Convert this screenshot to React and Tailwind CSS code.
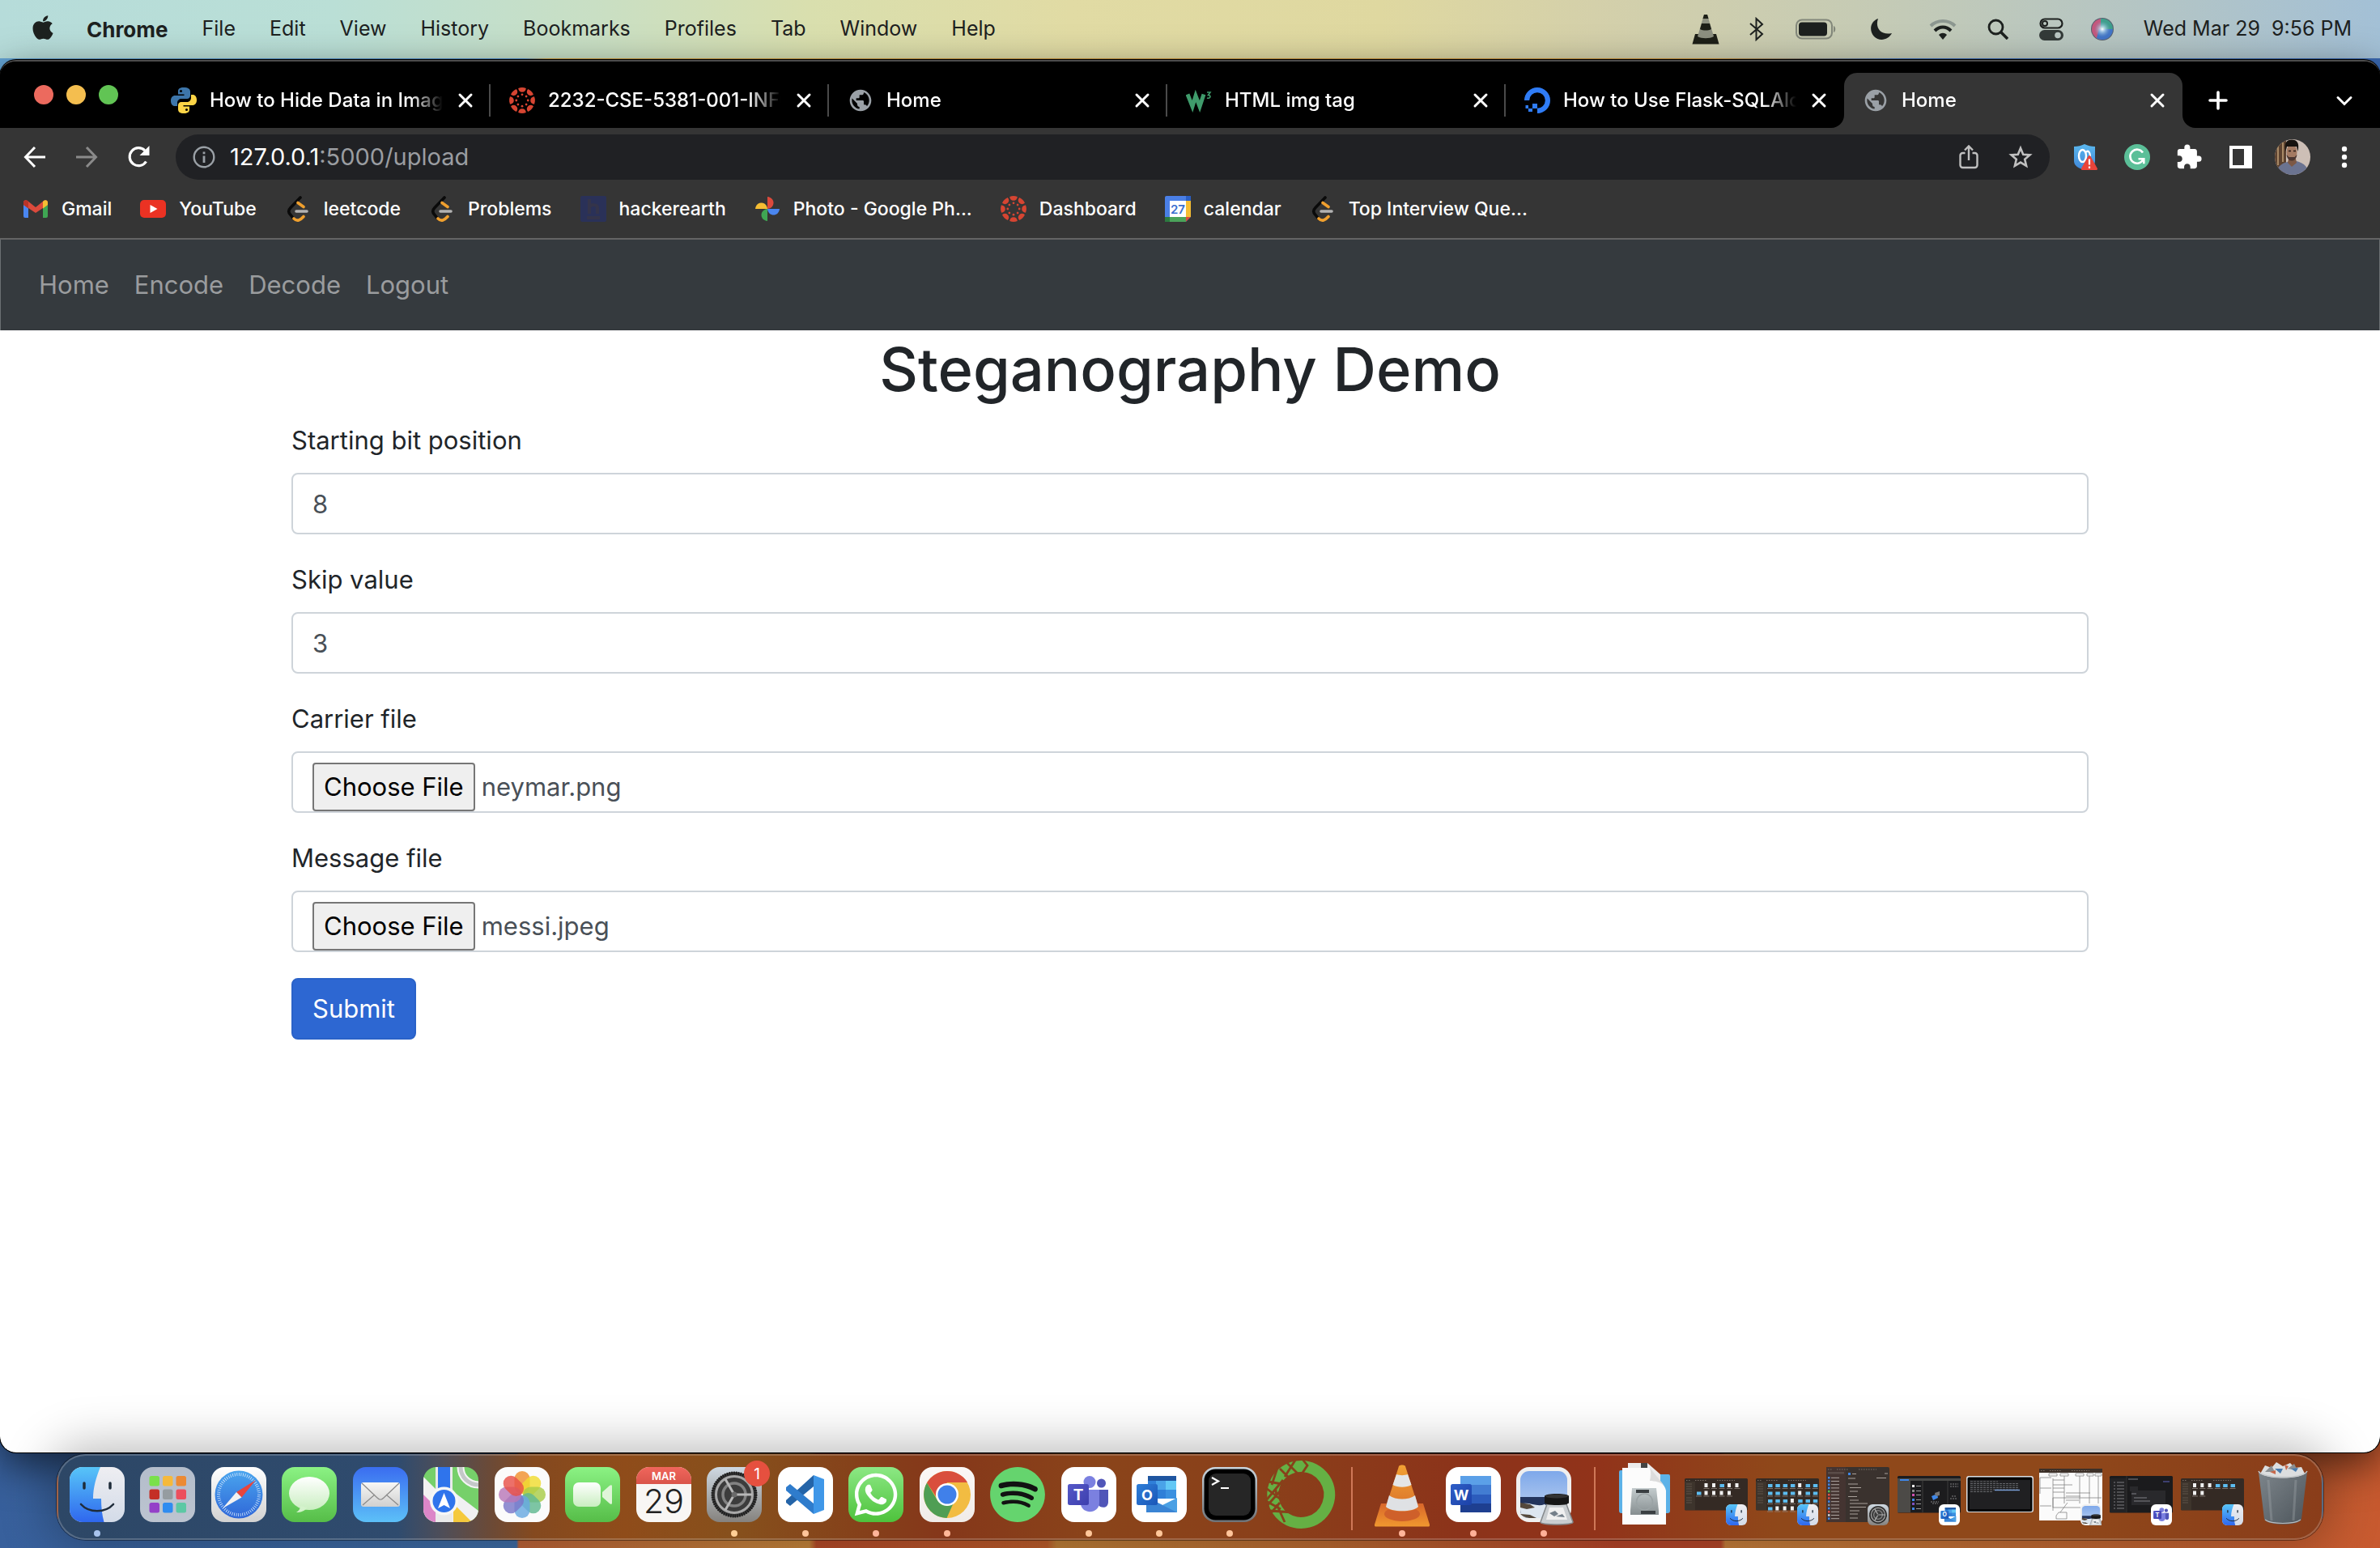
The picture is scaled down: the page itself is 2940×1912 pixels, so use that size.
import React from "react";
import { FaApple, FaWhatsapp, FaSpotify } from "react-icons/fa";
import { MdExtension, MdPublic } from "react-icons/md";

/* ---------- shared gradients ---------- */

function Grad({ id, a, b, diagonal }) {
  return (
    <linearGradient id={id} x1="0" y1="0" x2={diagonal ? "1" : "0"} y2="1">
      <stop offset="0" stopColor={a} />
      <stop offset="1" stopColor={b} />
    </linearGradient>
  );
}

function SharedDefs() {
  return (
    <svg className="absolute size-0" aria-hidden="true">
      <defs>
        <Grad id="finder-blue" a="#57c5f8" b="#2f67ee" />
        <Grad id="finder-grey" a="#eeeeF2" b="#d3dbe8" />
        <Grad id="pad" a="#b4bdcb" b="#bcc4d0" />
        <Grad id="white-grey" a="#ffffff" b="#d2d2d2" />
        <Grad id="safari" a="#4aa5ee" b="#2f67d8" />
        <Grad id="green" a="#8bf284" b="#56bd48" />
        <Grad id="bubble" a="#ffffff" b="#c9eec0" />
        <Grad id="mail" a="#3a6df0" b="#5cc0f8" />
        <Grad id="paper" a="#f7f7f5" b="#d0d0d0" />
        <Grad id="metal" a="#cfd9e2" b="#85827e" />
        <Grad id="wa" a="#8ce884" b="#4ec23c" />
        <Grad id="offwhite" a="#fbf8f6" b="#f0ebe8" />
        <Grad id="teams-box" a="#5558c8" b="#3d3fae" diagonal />
        <Grad id="outlook-box" a="#2f7fd8" b="#1a56b8" diagonal />
        <Grad id="word-box" a="#2f5fc8" b="#1c42a8" diagonal />
        <Grad id="term-edge" a="#c9d4dc" b="#6f7377" />
        <Grad id="cone" a="#f2a234" b="#d9702a" />
        <Grad id="cone-base" a="#d9662a" b="#f0982f" />
        <Grad id="sky" a="#7ea8ea" b="#c0d4f0" />
        <Grad id="drive" a="#c3cbcd" b="#868e90" />
        <Grad id="bin" a="#7d858b" b="#4d555b" diagonal />
        <Grad id="cal-red" a="#f0665c" b="#d9544a" />
        <Grad id="shield" a="#5bb8ee" b="#3f86d8" />
        <radialGradient id="siri">
          <stop offset="0" stopColor="#ffffff" />
          <stop offset="0.35" stopColor="#bfe0f0" stopOpacity="0.7" />
          <stop offset="1" stopColor="#6fa3c8" stopOpacity="0" />
        </radialGradient>
        <clipPath id="tile">
          <rect width="68" height="68" rx="16" />
        </clipPath>
        <clipPath id="disc">
          <circle cx="22" cy="22" r="22" />
        </clipPath>
        <clipPath id="orb">
          <circle cx="14" cy="14" r="13" />
        </clipPath>
      </defs>
    </svg>
  );
}

/* ---------- menu bar ---------- */

const menus = ["File", "Edit", "View", "History", "Bookmarks", "Profiles", "Tab", "Window", "Help"];

function MenuBar() {
  return (
    <header className="flex h-[72px] items-center justify-between bg-[linear-gradient(90deg,#b6dcda_0%,#badfd6_14%,#c9dfc4_25%,#d9dfae_34%,#e1dba4_45%,#dfd8a0_58%,#d4d0aa_67%,#c6cbb4_78%,#b4c5c4_90%,#a3c0d6_100%)] pr-[35px] pl-[39px] text-[25px] text-[#1d211f]">
      <nav className="flex items-center gap-[42px]">
        <button aria-label="Apple menu" className="-mt-1 -mr-0.5 w-7">
          <FaApple className="h-[34px] w-7" />
        </button>
        <button className="text-[26px] font-bold">Chrome</button>
        {menus.map((m) => (
          <button key={m}>{m}</button>
        ))}
      </nav>
      <div className="flex items-center">
        <button aria-label="VLC" className="mr-[36px]">
          <svg viewBox="0 0 34 38" className="h-[38px] w-[34px]">
            <path d="M4 25h26l3.500 12.500H.5z" fill="#1d1f17" />
            <path d="M15 1h4l8 27c-5 3-15 3-20 0z" fill="#8d9080" />
            <path d="M15 1h4l1.500 5h-7zM12 12h10l2 7c-4 2-10 2-14 0z" fill="#1d1f17" />
          </svg>
        </button>
        <button aria-label="Bluetooth" className="mr-[38px]">
          <svg viewBox="0 0 20 30" className="h-[30px] w-5" fill="none" stroke="currentColor" strokeWidth="2">
            <path d="M2 8l15 13-7.500 7V2l7.500 7L2 22" />
          </svg>
        </button>
        <button aria-label="Battery" className="mr-[42px]">
          <svg viewBox="0 0 50 26" className="h-[26px] w-[50px]">
            <rect x="1" y="1.500" width="44" height="23" rx="7" fill="none" stroke="#82877a" strokeWidth="2" />
            <rect x="4" y="4.500" width="35" height="17" rx="4" fill="currentColor" />
            <path d="M47 9c3 1 3 7 0 8z" fill="#82877a" />
          </svg>
        </button>
        <button aria-label="Do not disturb" className="mr-[45px]">
          <svg viewBox="0 0 28 28" className="size-7">
            <path d="M10 1C6 12 13 22 27 19 23 27 12 30 5 23-2 15 1 4 10 1z" fill="currentColor" />
          </svg>
        </button>
        <button aria-label="Wi-Fi" className="mr-[38px]">
          <svg viewBox="0 0 34 26" className="h-[26px] w-[34px]" fill="none" strokeWidth="4">
            <path d="M2 9c8-8 22-8 30 0" stroke="#8c9790" />
            <path d="M7 15c6-6 14-6 20 0" stroke="currentColor" />
            <path d="M17 26l-5-6c3-3 7-3 10 0z" fill="currentColor" />
          </svg>
        </button>
        <button aria-label="Search" className="mr-[38px]">
          <svg viewBox="0 0 26 26" className="size-[26px]" fill="none" stroke="currentColor" strokeWidth="2.800">
            <circle cx="10.500" cy="10.500" r="8.500" />
            <path d="M17 17l8 8" strokeWidth="3.500" />
          </svg>
        </button>
        <button aria-label="Control Centre" className="mr-[34px]">
          <svg viewBox="0 0 30 28" className="h-7 w-[30px]">
            <rect x="1.500" y="1.500" width="27" height="11" rx="5.500" fill="none" stroke="currentColor" strokeWidth="2.200" />
            <circle cx="7" cy="7" r="3" fill="none" stroke="currentColor" strokeWidth="2" />
            <rect y="15" width="30" height="13" rx="6.500" fill="#333a38" />
            <circle cx="23" cy="21.500" r="3.800" fill="#b9c6c2" />
          </svg>
        </button>
        <button aria-label="Siri" className="mr-[37px]">
          <svg viewBox="0 0 28 28" className="size-7">
            <circle cx="14" cy="14" r="14" fill="#56616f" />
            <g clipPath="url(#orb)">
              <path d="M0 0h14v28H0z" fill="#c4587e" />
              <path d="M12 0h16v14H12z" fill="#3f9f8c" />
              <path d="M10 14h18v14H6z" fill="#4275c8" />
              <circle cx="14" cy="14" r="10" fill="url(#siri)" />
            </g>
          </svg>
        </button>
        <time className="whitespace-pre">Wed Mar 29  9:56 PM</time>
      </div>
    </header>
  );
}

/* ---------- favicons ---------- */

function Python() {
  return (
    <svg viewBox="0 0 32 32" className="size-8">
      <path d="M15.800 0C10 0 9 2.500 9 5v3.500h7.500V10H5.500C2 10 0 12.500 0 16.500S2 23 5 23h3v-4c0-3 2.500-5 5-5h7c2.500 0 4-2 4-4V5c0-3-2.500-5-8.200-5z" fill="#3d76ab" />
      <path d="M16.200 32c5.800 0 6.800-2.500 6.800-5v-3.500h-7.500V22h11c3.500 0 5.500-2.500 5.500-6.500S30 9 27 9h-2v4c0 3-2.500 5-5 5h-7c-2.500 0-4 2-4 4v5c0 3 2 5 7.200 5z" fill="#fdd547" />
      <circle cx="12.500" cy="4.500" r="1.500" fill="#000" />
      <circle cx="19.500" cy="27.500" r="1.500" fill="#000" />
    </svg>
  );
}

function Canvas() {
  const arms = [0, 45, 90, 135, 180, 225, 270, 315];
  return (
    <svg viewBox="0 0 32 32" className="size-8" fill="#d64532">
      {arms.map((a) => (
        <g key={a} transform={`rotate(${a} 16 16)`}>
          <path d="M11.200 1Q16-.8 20.800 1 20.300 5.600 16 5.800 11.700 5.600 11.200 1z" />
          <circle cx="16" cy="8.800" r="1.400" />
        </g>
      ))}
    </svg>
  );
}

function Globe() {
  return <MdPublic className="size-8 text-[#9aa0a6]" />;
}

function W3() {
  return (
    <svg viewBox="0 0 32 32" className="size-8" fill="none" stroke="#3f9b6b">
      <path d="M2 8.500l6 15 4-13 5 13 5-15" strokeWidth="5" />
      <path d="M26 6h4l-2.500 3.500c4 0 3 5-1.500 3.500" strokeWidth="1.600" />
    </svg>
  );
}

function DigitalOcean() {
  return (
    <svg viewBox="0 0 32 32" className="size-8" fill="#2f7cf6">
      <path d="M16 32v-6.200A9.800 9.800 0 1 0 6.200 16H0A16 16 0 1 1 16 32z" />
      <path d="M10 20h6v6h-6zM5 26h5v4H5zM1.500 22H5v4H1.500z" />
    </svg>
  );
}

function Gmail() {
  return (
    <svg viewBox="0 0 32 32" className="size-8">
      <path d="M1 8h6v19H3a2 2 0 0 1-2-2z" fill="#4a86f0" />
      <path d="M25 8h6v17a2 2 0 0 1-2 2h-4z" fill="#3fa653" />
      <path d="M1 8c0-3 3-3.500 5-2l10 8v7L1 11z" fill="#dc4a3c" />
      <path d="M1 8c0-3 4-4 6-1v8.500L1 11z" fill="#b93428" />
      <path d="M31 8c0-3-3-3.500-5-2l-10 8v7l15-10z" fill="#dc4a3c" />
      <path d="M31 8c0-3-4-4-6-1v8.500l6-4.500z" fill="#f5bd33" />
    </svg>
  );
}

function YouTube() {
  return (
    <svg viewBox="0 0 32 32" className="size-8">
      <rect y="5" width="32" height="22" rx="5" fill="#eb3223" />
      <path d="M12.500 11v10l9-5z" fill="#fff" />
    </svg>
  );
}

function LeetCode() {
  return (
    <svg viewBox="0 0 32 32" className="size-8" fill="none" strokeLinecap="round">
      <path d="M19 2L7 14.500c-3 3-3 6 0 9l4 5" stroke="#0a0a0a" strokeWidth="3.600" />
      <path d="M16 8.500l7 5M11 28c4 4 8 2 12-2.500" stroke="#f0a02e" strokeWidth="3.600" />
      <path d="M14 19h13" stroke="#b3b3b3" strokeWidth="3.600" />
    </svg>
  );
}

function HackerEarth() {
  return (
    <svg viewBox="0 0 32 32" className="size-8">
      <rect width="32" height="32" rx="2" fill="#2a3158" />
      <path d="M11 4v18M11 14c2-4 10-4 10 1v7M8 27h16" fill="none" stroke="#34344a" strokeWidth="4" />
    </svg>
  );
}

function Photos() {
  return (
    <svg viewBox="0 0 32 32" className="size-8">
      <path d="M16 1c10 1 10 14 0 15z" fill="#dc4a3c" />
      <path d="M31 16c-1 10-14 10-15 0z" fill="#4a86f0" />
      <path d="M16 31c-10-1-10-14 0-15z" fill="#3fa653" />
      <path d="M1 16c1-10 14-10 15 0z" fill="#f5bd33" />
    </svg>
  );
}

function Calendar27() {
  return (
    <svg viewBox="0 0 32 32" className="size-8">
      <rect width="32" height="32" rx="2" fill="#4a7fe6" />
      <path d="M26 0h6v6h-6z" fill="#2a5fc4" />
      <path d="M26 6h6v20h-6z" fill="#f5bd33" />
      <path d="M6 26h20v6H6z" fill="#4ba35a" />
      <path d="M0 26h6v6H0z" fill="#2c7a40" />
      <path d="M26 26h6l-6 6z" fill="#dc4a3c" />
      <path d="M32 26v6h-6z" fill="#353535" />
      <path d="M6 6h20v20H6z" fill="#fff" />
      <text x="16" y="21.500" textAnchor="middle" fontSize="15" fontWeight="600" fill="#3a6fd0" fontFamily="Inter, sans-serif">27</text>
    </svg>
  );
}

/* ---------- browser chrome ---------- */

const tabs = [
  { title: "How to Hide Data in Images", icon: Python },
  { title: "2232-CSE-5381-001-INFO", icon: Canvas },
  { title: "Home", icon: Globe },
  { title: "HTML img tag", icon: W3 },
  { title: "How to Use Flask-SQLAlchemy", icon: DigitalOcean },
  { title: "Home", icon: Globe, active: true },
];

function Close() {
  return (
    <svg viewBox="0 0 24 24" className="size-6" fill="none" stroke="#fff" strokeWidth="3" strokeLinecap="round">
      <path d="M5 5l14 14M19 5L5 19" />
    </svg>
  );
}

function Tab({ tab, divider }) {
  const Icon = tab.icon;
  return (
    <div
      className={
        tab.active
          ? "relative flex h-[68px] max-w-[418px] flex-1 items-center rounded-t-2xl bg-[#353535]"
          : "flex h-[68px] max-w-[418px] flex-1 items-center"
      }
    >
      {tab.active && (
        <>
          <svg viewBox="0 0 16 16" className="absolute bottom-0 -left-4 size-4">
            <path d="M16 0v16H0A16 16 0 0 0 16 0z" fill="#353535" />
          </svg>
          <svg viewBox="0 0 16 16" className="absolute -right-4 bottom-0 size-4">
            <path d="M0 0v16h16A16 16 0 0 1 0 0z" fill="#353535" />
          </svg>
        </>
      )}
      <button className="flex min-w-0 flex-1 items-center gap-4 pl-[23px]">
        <span className="shrink-0">
          <Icon />
        </span>
        <span className="min-w-0 flex-1 overflow-hidden text-left whitespace-nowrap [mask-image:linear-gradient(to_right,black_86%,transparent)]">
          {tab.title}
        </span>
      </button>
      <button aria-label="Close tab" className="mr-[17px] ml-4">
        <Close />
      </button>
      <span className={divider ? "h-10 w-0.5 bg-[#4a4a4a]" : "h-10 w-0.5"} />
    </div>
  );
}

function TabStrip() {
  return (
    <div className="flex h-[82px] items-end bg-black text-2xl font-medium text-white">
      <div className="flex w-[188px] shrink-0 gap-4 self-stretch pt-[29px] pl-[42px]">
        <button aria-label="Close" className="size-6 rounded-full bg-[#ec6a5e]" />
        <button aria-label="Minimise" className="size-6 rounded-full bg-[#f4be4f]" />
        <button aria-label="Zoom" className="size-6 rounded-full bg-[#61c454]" />
      </div>
      <div className="flex min-w-0 flex-1">
        {tabs.map((t, i) => (
          <Tab key={i} tab={t} divider={i < 4} />
        ))}
        <button aria-label="New tab" className="ml-8 flex h-[68px] items-center">
          <svg viewBox="0 0 24 24" className="size-6" fill="none" stroke="#fff" strokeWidth="3.600" strokeLinecap="round">
            <path d="M12 2v20M2 12h20" />
          </svg>
        </button>
      </div>
      <button aria-label="Search tabs" className="mr-8 flex h-[68px] items-center">
        <svg viewBox="0 0 24 24" className="size-6" fill="none" stroke="#fff" strokeWidth="3" strokeLinecap="round">
          <path d="M4 8.500l8 8 8-8" />
        </svg>
      </button>
    </div>
  );
}

function Toolbar() {
  const slot = "flex w-16 shrink-0 items-center justify-center";
  return (
    <div className="flex h-[72px] items-center bg-[#353535] pr-3 pl-[11px]">
      <button aria-label="Back" className="flex w-16 shrink-0 justify-center">
        <svg viewBox="0 0 28 28" className="size-7" fill="none" stroke="#fff" strokeWidth="3">
          <path d="M27 14H3M14 2L2.500 14 14 26" />
        </svg>
      </button>
      <button aria-label="Forward" className="flex w-16 shrink-0 justify-center">
        <svg viewBox="0 0 28 28" className="size-7" fill="none" stroke="#8a8a8a" strokeWidth="3">
          <path d="M1 14h24M14 2l11.500 12L14 26" />
        </svg>
      </button>
      <button aria-label="Reload" className="flex w-16 shrink-0 justify-center">
        <svg viewBox="0 0 28 28" className="size-7" fill="none" stroke="#fff" strokeWidth="3.200">
          <path d="M23.500 19.500A11 11 0 1 1 22 6" />
          <path d="M27.500 0v12h-12z" fill="#fff" stroke="none" />
        </svg>
      </button>
      <div className="ml-3.5 flex h-14 min-w-0 flex-1 items-center rounded-full bg-[#202124] pr-1 pl-[21px]">
        <svg viewBox="0 0 28 28" className="mr-[18px] size-7 shrink-0" fill="none" stroke="#9aa0a6" strokeWidth="2.400">
          <circle cx="14" cy="14" r="12.300" />
          <path d="M14 12.500V21M14 7.500v2.800" strokeWidth="2.800" />
        </svg>
        <div className="flex-1 text-[29px] text-[#9a9da1]">
          <span className="text-white">127.0.0.1</span>:5000/upload
        </div>
        <button aria-label="Share" className={slot}>
          <svg viewBox="0 0 28 32" className="h-8 w-7" fill="none" stroke="#c0c0c0" strokeWidth="2.400">
            <path d="M9.500 11H6.500a3 3 0 0 0-3 3v12a3 3 0 0 0 3 3h15a3 3 0 0 0 3-3V14a3 3 0 0 0-3-3h-3M14 20V3M9 7.500l5-5 5 5" />
          </svg>
        </button>
        <button aria-label="Bookmark" className={slot}>
          <svg viewBox="0 0 30 30" className="size-[30px]" fill="none" stroke="#c0c0c0" strokeWidth="2.600">
            <path d="M15 4l3.200 7.700 8.300.7-6.300 5.400 1.900 8.100-7.100-4.300-7.100 4.300 1.900-8.100-6.300-5.400 8.300-.7z" />
          </svg>
        </button>
      </div>
      <div className="ml-3 flex">
        <button aria-label="Site protection" className={slot}>
          <svg viewBox="0 0 30 32" className="h-8 w-[30px]">
            <path d="M1 3c5 0 9-1 13-3 4 2 8 3 13 3v18c0 6-6 9-13 11C7 30 1 27 1 21z" fill="url(#shield)" />
            <ellipse cx="11.500" cy="14.500" rx="4.500" ry="7.500" fill="none" stroke="#fff" strokeWidth="2.400" />
            <path d="M15.500 10c3-3 5.500 0 5.500 5" fill="none" stroke="#fff" strokeWidth="2.200" />
            <path d="M18.500 15c.8-1.500 2.200-1.500 3 0l8.300 15c.5 1 0 2-1 2H11c-1 0-1.500-1-1-2z" fill="#e9443a" />
            <path d="M20 18.500v7M20 27.500V30" stroke="#fff" strokeWidth="2.200" />
          </svg>
        </button>
        <button aria-label="Grammarly" className={slot}>
          <svg viewBox="0 0 32 32" className="size-8" fill="none" stroke="#fff" strokeWidth="2.600">
            <circle cx="16" cy="16" r="16" fill="#5bbf98" stroke="none" />
            <path d="M23 10.500A8.500 8.500 0 1 0 23.500 19M17.500 18.200h6.800v6" />
          </svg>
        </button>
        <button aria-label="Extensions" className={slot}>
          <MdExtension className="size-[34px] text-white" />
        </button>
        <button aria-label="Side panel" className={slot}>
          <svg viewBox="0 0 28 28" className="size-7">
            <path d="M0 0h28v28H0zM4 4v20h14V4z" fill="#fff" fillRule="evenodd" />
          </svg>
        </button>
        <button aria-label="Profile" className={slot}>
          <svg viewBox="0 0 44 44" className="size-11">
            <g clipPath="url(#disc)">
              <path d="M0 0h44v44H0z" fill="#cdbfb6" />
              <path d="M0 0h14v44H0z" fill="#5c4230" />
              <path d="M4 6v26M10 4v24" stroke="#a98a66" strokeWidth="2" />
              <path d="M2 44c0-12 8-15 20-18 12 2 19 6 20 18z" fill="#6b7390" />
              <path d="M17 24h9l1 5-6 5-5-5z" fill="#7d5844" />
              <ellipse cx="21" cy="16" rx="6.500" ry="10" fill="#a37a62" />
              <path d="M14.500 19c1 6 4 7.500 6.500 7.500s5.500-1.500 6.500-7.500l-3 3h-7z" fill="#4a3630" />
              <path d="M17 14.500h3M23 14.500h3" stroke="#2a1d18" strokeWidth="1.400" />
              <path d="M13.500 15C11 4 15 .5 21 .5S31 4 28.500 15l-1.500-6H15z" fill="#17130f" />
            </g>
          </svg>
        </button>
        <button aria-label="Chrome menu" className={slot}>
          <svg viewBox="0 0 8 28" className="h-7 w-2" fill="#fff">
            <circle cx="4" cy="4" r="3.200" />
            <circle cx="4" cy="14" r="3.200" />
            <circle cx="4" cy="24" r="3.200" />
          </svg>
        </button>
      </div>
    </div>
  );
}

const bookmarks = [
  ["Gmail", Gmail],
  ["YouTube", YouTube],
  ["leetcode", LeetCode],
  ["Problems", LeetCode],
  ["hackerearth", HackerEarth],
  ["Photo - Google Ph...", Photos],
  ["Dashboard", Canvas],
  ["calendar", Calendar27],
  ["Top Interview Que...", LeetCode],
];

function BookmarkBar() {
  return (
    <div className="flex gap-[35px] border-b-2 border-[#646464] bg-[#353535] pb-2 pl-7 text-[23px] font-medium text-white">
      {bookmarks.map(([label, Icon]) => (
        <a key={label} href="#" className="flex h-14 items-center gap-4 whitespace-nowrap">
          <Icon />
          {label}
        </a>
      ))}
    </div>
  );
}

/* ---------- page ---------- */

function TextField({ id, label, value }) {
  return (
    <div className="mb-8">
      <label htmlFor={id} className="mb-4 block leading-[48px]">
        {label}
      </label>
      <input
        id={id}
        type="text"
        defaultValue={value}
        className="block h-[76px] w-full rounded-lg border-2 border-[#ced4da] bg-white px-6 text-[#495057]"
      />
    </div>
  );
}

function FileField({ id, label, file }) {
  return (
    <div className="mb-8">
      <label htmlFor={id} className="mb-4 block leading-[48px]">
        {label}
      </label>
      <div className="relative flex h-[76px] items-center gap-2 rounded-lg border-2 border-[#ced4da] bg-white px-6 pt-3 text-[#495057]">
        <input id={id} type="file" className="sr-only" />
        <label
          htmlFor={id}
          className="flex h-[60px] items-center rounded border-2 border-[#767676] bg-[#efefef] px-3 text-black"
        >
          Choose File
        </label>
        <span>{file}</span>
      </div>
    </div>
  );
}

function Page() {
  return (
    <div className="flex flex-1 flex-col rounded-b-[20px] bg-white text-[31px] text-[#212529]">
      <nav className="flex h-28 items-center gap-[31px] border-x border-[#6b6f72] bg-[#353a3e] pl-[47px] text-[#9a9c9e]">
        {["Home", "Encode", "Decode", "Logout"].map((l) => (
          <a key={l} href="#">
            {l}
          </a>
        ))}
      </nav>
      <main className="mx-auto w-full max-w-[2220px]">
        <h1 className="mb-4 text-center text-[74px] leading-[96px] font-medium">Steganography Demo</h1>
        <form onSubmit={(e) => e.preventDefault()}>
          <TextField id="start" label="Starting bit position" value="8" />
          <TextField id="skip" label="Skip value" value="3" />
          <FileField id="carrier" label="Carrier file" file="neymar.png" />
          <FileField id="message" label="Message file" file="messi.jpeg" />
          <button
            type="submit"
            className="h-[76px] rounded-lg border-2 border-[#2a62c8] bg-[#2d67d2] px-6 text-white"
          >
            Submit
          </button>
        </form>
      </main>
    </div>
  );
}

/* ---------- dock icons, drawn on a 68 unit tile ---------- */

function Finder() {
  return (
    <g clipPath="url(#tile)">
      <rect width="68" height="68" fill="url(#finder-grey)" />
      <path d="M0 0h38C33 12 29 25 29 39h10c0 10 1 20 3.500 29H0z" fill="url(#finder-blue)" />
      <path d="M18 20v6M50 20v6" stroke="#1f2c3a" strokeWidth="3.500" strokeLinecap="round" />
      <path d="M14 46c10 11 30 11 40 0" fill="none" stroke="#1f2c3a" strokeWidth="2.600" strokeLinecap="round" />
    </g>
  );
}

function Launchpad() {
  const c = ["#7ae04c", "#f5b93c", "#ec8a34", "#c42f26", "#959ca0", "#ec4f5e", "#9440c8", "#2f8cf0", "#5cc8a4"];
  return (
    <g>
      <rect width="68" height="68" rx="16" fill="url(#pad)" />
      {c.map((f, i) => (
        <rect key={f} x={11.500 + (i % 3) * 16.500} y={11 + Math.floor(i / 3) * 16.500} width="12.500" height="12.500" rx="2.500" fill={f} />
      ))}
    </g>
  );
}

function Safari() {
  return (
    <g>
      <rect width="68" height="68" rx="16" fill="url(#white-grey)" />
      <circle cx="34" cy="34" r="29.500" fill="url(#safari)" />
      <circle cx="34" cy="34" r="25" fill="none" stroke="#d5e8fb" strokeWidth="4" strokeDasharray="0.8 1.800" />
      <path d="M55 16L37.500 37.500 31 31z" fill="#e8453c" />
      <path d="M14 51l17-20 6.500 6.500z" fill="#f2f2f2" />
    </g>
  );
}

function Messages() {
  return (
    <g>
      <rect width="68" height="68" rx="16" fill="url(#green)" />
      <ellipse cx="34" cy="32.500" rx="25" ry="20.500" fill="url(#bubble)" />
      <path d="M23 48c0 4-2 6-5 8 6 0 11-2 13-6z" fill="#d4f2cc" />
    </g>
  );
}

function Mail() {
  return (
    <g>
      <rect width="68" height="68" rx="16" fill="url(#mail)" />
      <rect x="10" y="19" width="48" height="30" rx="3" fill="url(#paper)" />
      <path d="M12 47l15-13M56 47L41 34M11 20l19 18c3 3 5 3 8 0l19-18" fill="none" stroke="#8a8a8a" strokeWidth="1.200" />
    </g>
  );
}

function Maps() {
  return (
    <g clipPath="url(#tile)">
      <rect width="68" height="68" fill="#76d06a" />
      <path d="M0 12l56 56H0z" fill="#f2f2f2" />
      <path d="M0 34l16 16v18H0z" fill="#dc86c8" />
      <path d="M37 46l30 22H37z" fill="#f5c93c" />
      <path d="M34 28l34 26v14h-8L34 42z" fill="#f0f0f2" />
      <circle cx="68" cy="0" r="22" fill="none" stroke="#f4f4f4" strokeWidth="9" />
      <circle cx="68" cy="0" r="22" fill="none" stroke="#c4c8c8" strokeWidth="5" />
      <path d="M15 0h21v68H15z" fill="#eaeaea" />
      <path d="M18 0h15v34H18z" fill="#2f74ec" />
      <circle cx="25.500" cy="42" r="17.500" fill="#f6f6f6" />
      <circle cx="25.500" cy="42" r="14" fill="#2f74ec" />
      <path d="M25.500 32l7.500 19-7.500-4-7.500 4z" fill="#fff" />
    </g>
  );
}

function PhotosApp() {
  const petals = ["#f09030", "#f0dc30", "#a8cc48", "#60b890", "#68a8e0", "#7a78c8", "#b878b8", "#e85048"];
  return (
    <g>
      <rect width="68" height="68" rx="16" fill="#fbfbfb" />
      {petals.map((p, i) => (
        <rect key={p} x="24.500" y="5" width="19" height="28" rx="9.500" fill={p} opacity="0.82" transform={`rotate(${i * 45} 34 34)`} />
      ))}
    </g>
  );
}

function FaceTime() {
  return (
    <g>
      <rect width="68" height="68" rx="16" fill="url(#green)" />
      <rect x="10" y="19" width="34" height="30" rx="7" fill="url(#bubble)" />
      <path d="M46 31l9-8c2-1.500 3-1 3 1v20c0 2-1 2.500-3 1l-9-8z" fill="#dff5d8" />
    </g>
  );
}

function CalendarApp() {
  return (
    <g clipPath="url(#tile)">
      <rect width="68" height="68" fill="#f8f6f4" />
      <rect width="68" height="21" fill="url(#cal-red)" />
      <text x="34" y="16" textAnchor="middle" fontSize="13" fontWeight="600" fill="#fff" fontFamily="Inter, sans-serif">MAR</text>
      <text x="34" y="57" textAnchor="middle" fontSize="41" fontWeight="300" fill="#222" fontFamily="Inter, sans-serif">29</text>
    </g>
  );
}

function Gear() {
  return (
    <g>
      <rect width="68" height="68" rx="16" fill="url(#metal)" />
      <circle cx="34" cy="34" r="28" fill="#3c3c3c" />
      <circle cx="34" cy="34" r="26.500" fill="none" stroke="#1c1c1c" strokeWidth="4" strokeDasharray="1.600 1.200" />
      <circle cx="34" cy="34" r="22.500" fill="none" stroke="#a8a8a8" strokeWidth="3" />
      <circle cx="34" cy="34" r="14" fill="none" stroke="#828282" strokeWidth="3.500" />
      <path d="M34 34h22M34 34L23 15M34 34L23 53" stroke="#b8b8b8" strokeWidth="3" />
      <circle cx="34" cy="34" r="3.500" fill="#6a6a6a" />
    </g>
  );
}

function Settings() {
  return (
    <g>
      <Gear />
      <circle cx="62" cy="8" r="16" fill="#e6503f" />
      <text x="62" y="15" textAnchor="middle" fontSize="19" fill="#fff" fontFamily="Inter, sans-serif">1</text>
    </g>
  );
}

function VSCode() {
  return (
    <g>
      <rect width="68" height="68" rx="16" fill="#fff" />
      <path d="M44 10v14L15 48l-5-4v-3z" fill="#2464a8" />
      <path d="M10 25l5-4 29 24v13L10 29z" fill="#2f7ccc" />
      <path d="M44 10l13 5v38l-13 5z" fill="#3f97e8" />
    </g>
  );
}

function WhatsAppIcon() {
  return (
    <g>
      <rect width="68" height="68" rx="16" fill="url(#wa)" />
      <FaWhatsapp x="4" y="4" size={60} color="#fff" />
    </g>
  );
}

function ChromeApp() {
  return (
    <g>
      <rect width="68" height="68" rx="16" fill="url(#offwhite)" />
      <circle cx="34" cy="34" r="29" fill="#f2bc42" />
      <path d="M9 19.500a29 29 0 0 1 50-0.500H34L23 40.500z" fill="#d94f3d" />
      <path d="M9 19.500L22 41l11 4 9-1-8.500 19A29 29 0 0 1 9 19.500z" fill="#4f9e54" />
      <circle cx="34" cy="34" r="14" fill="#fff" />
      <circle cx="34" cy="34" r="11.500" fill="#4080ea" />
    </g>
  );
}

function Spotify() {
  return (
    <g>
      <circle cx="34" cy="34" r="32" fill="#121212" />
      <FaSpotify x="-1" y="-1" size={70} color="#65d46e" />
    </g>
  );
}

function Teams() {
  return (
    <g>
      <rect width="68" height="68" rx="16" fill="#fff" />
      <circle cx="49.500" cy="20" r="5.500" fill="#5055b8" />
      <circle cx="35" cy="18.500" r="7.500" fill="#7b80e0" />
      <path d="M42 28h16v15c0 8-9 9-13 3z" fill="#5055b8" />
      <path d="M24 28h23v16c0 14-21 15-23 2z" fill="#7b80e0" />
      <rect x="8" y="21" width="26" height="26" rx="2.500" fill="url(#teams-box)" />
      <text x="21" y="41" textAnchor="middle" fontSize="19" fontWeight="700" fill="#fff" fontFamily="Inter, sans-serif">T</text>
    </g>
  );
}

function Outlook() {
  return (
    <g>
      <rect width="68" height="68" rx="16" fill="#fff" />
      <path d="M20 11h35v28H20z" fill="#2f7fd8" />
      <path d="M20 11h35v6H20z" fill="#1f56a0" />
      <path d="M42 17h13v11H42z" fill="#62c8f5" />
      <path d="M30 17h12v11H30z" fill="#4aa3e8" />
      <path d="M42 28h13v11H42z" fill="#3a90e0" />
      <path d="M18 37l20 10 18-9v18H18z" fill="#4aa0e4" />
      <path d="M18 37l38 19H18z" fill="#3a84d4" />
      <rect x="6" y="21" width="26" height="26" rx="2.500" fill="url(#outlook-box)" />
      <text x="19" y="40.500" textAnchor="middle" fontSize="18" fontWeight="700" fill="#fff" fontFamily="Inter, sans-serif">O</text>
    </g>
  );
}

function Terminal() {
  return (
    <g>
      <rect width="68" height="68" rx="16" fill="url(#term-edge)" />
      <rect x="2.500" y="2.500" width="63" height="63" rx="14" fill="#000" />
      <rect x="8" y="8" width="52" height="52" rx="9" fill="#262626" />
      <path d="M12 13l8 4.500-8 4.500M23 26h10" fill="none" stroke="#fff" strokeWidth="2.200" />
    </g>
  );
}

function Anaconda() {
  return (
    <g fill="none">
      <path d="M35-1A35 35 0 1 1 12 61A35 35 0 0 1 35-1" stroke="#65b044" strokeWidth="14" />
      <path d="M34-12l8 10-8 12M28-10L14 12M16-6l14 14M8 2l13 13M6-2L-2 22M-6 18l22 4M-9 26l18 14M12 16L-8 40M-8 48L8 30M-9 42l18 10M3 28l1 10M-4 58l12-14M-4 54l28 2M4 46l10 22" stroke="#88401a" strokeWidth="2.800" />
    </g>
  );
}

function Vlc() {
  return (
    <g>
      <path d="M8 45h52l8 26c0 2 0 2.500-2 2.500H2C0 73.500 0 73 0 71z" fill="url(#cone-base)" />
      <ellipse cx="34" cy="58" rx="22" ry="9" fill="#cf602a" />
      <path d="M30-1c1-2 7-2 8 0l16 50c-4 8-36 8-40 0z" fill="url(#cone)" />
      <path d="M27 9c4 1.500 10 1.500 14 0l4.500 13c-6 3.500-17 3.500-23 0z" fill="#e4e6e8" />
      <path d="M18 35c8 6 24 6 32 0l4 14c-6 7-34 7-40 0z" fill="#dfe1e4" />
    </g>
  );
}

function Word() {
  return (
    <g>
      <rect width="68" height="68" rx="16" fill="#fff" />
      <path d="M18 11h38v12H18z" fill="#5ba0e8" />
      <path d="M18 22h38v12H18z" fill="#427cd2" />
      <path d="M18 34h38v11H18z" fill="#2c5cbc" />
      <path d="M18 45h38v11H18z" fill="#1e3f90" />
      <rect x="6" y="21" width="26" height="26" rx="2.500" fill="url(#word-box)" />
      <text x="19" y="40.500" textAnchor="middle" fontSize="18" fontWeight="700" fill="#fff" fontFamily="Inter, sans-serif">W</text>
    </g>
  );
}

function Preview() {
  return (
    <g>
      <rect width="68" height="68" rx="16" fill="#efefef" />
      <rect x="5" y="5" width="58" height="58" rx="11" fill="url(#sky)" />
      <path d="M5 37h58v16q0 10-10 10H16Q5 63 5 52z" fill="#23345c" />
      <path d="M5 46c10-4 20 4 30 0l10 6 18-4v6q0 9-10 9H16Q5 63 5 52z" fill="#dde6f0" />
      <path d="M5 44l12 2 6 4-10 2-8-2zM5 58l12 1 8 4H16Q9 62 5 58z" fill="#54483c" />
      <path d="M38 46h24l8 22c0 4-40 4-40 0z" fill="#c9cdd0" stroke="#85898c" strokeWidth="1.500" />
      <path d="M41 50h17l5 15H37z" fill="#f0f0f0" />
      <path d="M41 57l7-3 4 4-5 3zM49 61l8-3 3 4z" fill="#75808a" />
      <path d="M35 36c0-4 30-4 30 0v8c0 4-30 4-30 0z" fill="#161616" />
      <ellipse cx="50" cy="36" rx="14" ry="2.500" fill="#333" />
    </g>
  );
}

function Documents() {
  return (
    <g>
      <path d="M1 6q0-2 2-2h20l4 5h35q2 0 2 2v43q0 3-3 3H4q-3 0-3-3z" fill="#5cb2e8" />
      <path d="M12-5h24L52 9v20H12z" fill="#ececec" />
      <path d="M28-5h8v6h-8z" fill="#444" />
      <path d="M5 1h34c2 6 0 10 0 16 8-2 18 2 20 12v42H5z" fill="#fcfcfc" />
      <path d="M39 1l18 22c-4-4-12-6-18-6 2-5 2-10 0-16z" fill="#dcdcdc" />
      <path d="M17 26h30l3 28v5H15v-5z" fill="url(#drive)" />
      <path d="M22 28h16v4H22zM28 54h18v4H28z" fill="#3a3f42" />
      <circle cx="32.500" cy="43" r="10" fill="none" stroke="#9ba3a5" strokeWidth="1.500" />
    </g>
  );
}

function Badge({ children }) {
  return (
    <svg x="46" y="46" width="26" height="26" viewBox="0 0 68 68">
      {children}
    </svg>
  );
}

function Lights({ y }) {
  return <path d={`M-3 ${y}h6M8 ${y}h14M35 ${y}h22`} stroke="#7a6f66" strokeWidth="1" strokeDasharray="1.500 1.500" />;
}

/* Cells are [column, row, isFolder]. */
function FinderThumb({ cells, pitch, side }) {
  return (
    <g>
      <rect x="-5" y="14" width="78" height="39.500" rx="1.500" fill="#342a24" />
      <path d={`M-5 18h${side}v35h-${side}z`} fill="#3d342c" />
      <Lights y={16.500} />
      {[21, 24, 27, 30, 33, 38, 41, 44].map((y) => (
        <path key={y} d={`M-3 ${y}h7`} stroke="#685c50" strokeWidth="0.800" />
      ))}
      {cells.map(([c, r, f], i) => {
        const x = side - 3 + c * pitch;
        const y = 20 + r * 9.500;
        return (
          <g key={i}>
            <rect x={x} y={y + (f ? 1 : 0)} width={f ? 5.500 : 4} height={f ? 4 : 5} fill={f ? "#5cbcf0" : "#f0f0f0"} />
            <path d={`M${x - 1} ${y + 6.500}h7`} stroke="#8f8780" strokeWidth="0.800" />
          </g>
        );
      })}
      <Badge>
        <Finder />
      </Badge>
    </g>
  );
}

const cellsA = [[1, 0, 0], [2, 0, 0], [3, 0, 1], [4, 0, 0], [5, 0, 0], [0, 1, 1], [1, 1, 0], [2, 1, 0], [3, 1, 0], [4, 1, 0]];
const cellsB = [0, 1, 2, 3].flatMap((r) => [0, 1, 2, 3, 4, 5, 6].slice(0, r === 3 ? 4 : 7).map((c) => [c, r, !(c === 4 && r < 2) && !(r === 2 && c === 3) && !(r === 3 && c > 0)]));
const cellsC = [[0, 0, 0], [1, 0, 0], [2, 0, 0], [3, 0, 1], [4, 0, 1], [5, 0, 1], [0, 1, 0], [1, 1, 0]];

function ThumbA() {
  return <FinderThumb cells={cellsA} pitch={9.500} side={13} />;
}
function ThumbB() {
  return <FinderThumb cells={cellsB} pitch={9.300} side={13} />;
}
function ThumbC() {
  return <FinderThumb cells={cellsC} pitch={9.300} side={13} />;
}

function SettingsThumb() {
  const dots = ["#3f87e8", "#3f87e8", "#3f87e8", "#3f87e8", "#4fc052", "#e05045", "#e05045", "#3f87e8", "#8a8a8a", "#3f87e8", "#e05045", "#d8d8d8", "#3f87e8"];
  return (
    <g>
      <rect x="-5" width="78" height="68" rx="2" fill="#3a322e" />
      <path d="M-5 0h24v68H-5z" fill="#443431" />
      <Lights y={3} />
      <rect x="-3" y="6" width="20" height="2.500" fill="#5a4c48" />
      {dots.map((d, i) => (
        <g key={i}>
          <rect x="-3" y={12 + i * 4.200} width="2.500" height="2.500" fill={d} />
          <path d={`M1 ${13.300 + i * 4.200}h10`} stroke="#b8b0ac" strokeWidth="0.900" />
        </g>
      ))}
      <rect x="22" y="7" width="3" height="3" fill="#3f87e8" />
      <path d="M27 8.500h5M67 8h4M22 14h9M57 13.500h12M22 21h12M24 25.500h14M24 30h10M22 36.500h11M24 41h11M24 45h22M24 49.500h20M24 54h12M24 58h10M24 63h10" stroke="#a8a09a" strokeWidth="1" />
      <Badge>
        <Gear />
      </Badge>
    </g>
  );
}

function OutlookThumb() {
  return (
    <g>
      <rect x="-5" y="11" width="78" height="45.500" rx="1.500" fill="#1c1c1e" />
      <path d="M-5 14h78v3H-5z" fill="#4a4a48" />
      <path d="M-5 17h16v39H-5z" fill="#4c4a47" />
      <path d="M-2 15h11v2H-2z" fill="#3f87e8" />
      <path d="M26 17v39M57 17v39" stroke="#3c3c3c" />
      {[22, 28, 33, 39, 44, 50].map((y, i) => (
        <g key={y}>
          <rect x="13" y={y} width="3" height="3" fill={["#eee", "#888", "#d050b0", "#3f87e8", "#8050c0", "#3f87e8"][i]} />
          <path d={`M18 ${y + 1.500}h6`} stroke="#a8a8a8" strokeWidth="0.900" />
        </g>
      ))}
      <path d="M37 36l7-3 1 5-6 3z" fill="#3f87e8" />
      <path d="M41 32l6-2v5l-5 1z" fill="#777" />
      <path d="M36 43h10M38 45h7M60 21h10M60 24h10M62 36h5M60 39h8" stroke="#999" strokeWidth="0.800" strokeDasharray="2 1" />
      <Badge>
        <Outlook />
      </Badge>
    </g>
  );
}

function TerminalThumb() {
  return (
    <g>
      <rect x="-7" y="11" width="83" height="45" rx="3" fill="#dcdfe2" />
      <rect x="-5.500" y="12.500" width="80" height="42.500" rx="2" fill="#060606" />
      <rect x="-3" y="16" width="75" height="36" fill="#202022" />
      <path d="M-2 18h34M-2 20.500h60M-2 23h60M-2 25.500h60M-2 28h60M-2 30.500h28" stroke="#77797c" strokeWidth="0.800" strokeDasharray="3 1" />
      <path d="M28 28.500h31" stroke="#7ba0d8" strokeWidth="1.400" />
    </g>
  );
}

function DiagramThumb() {
  return (
    <g>
      <rect x="-5" y="2" width="78" height="64" fill="#fbfbfb" />
      <path d="M-5 2h78v5H-5z" fill="#3c3028" />
      <Lights y={4.500} />
      <g fill="none" stroke="#777" strokeWidth="0.700">
        <path d="M7 8h10v3H7zM21 8h10v3H21zM40 8h10v3H40zM54 8h8v3h-8zM64 8h8v3h-8z" />
        <path d="M-4 13h14M-4 13v20M12 14v40M26 11v34M45 11v34M57 11v34M68 11v34M12 16h14M12 22h14M12 26h14M12 31h14M-4 26h14M26 22h10M28 32h18M46 32h12M28 36h18M28 41h16M12 38h60M12 50h34M12 38v12M30 44l-9 12M-4 48h14M16 60l3-4h10v8H16z" />
      </g>
      <Badge>
        <Preview />
      </Badge>
    </g>
  );
}

function TeamsThumb() {
  return (
    <g>
      <rect x="-5" y="11" width="78" height="45.500" rx="1.500" fill="#1b1b1d" />
      <path d="M-5 14h21v42H-5z" fill="#232325" />
      <path d="M16 11v45" stroke="#333" />
      {[19, 23, 27, 31, 35, 39, 43, 47, 51].map((y) => (
        <path key={y} d={`M0 ${y}h2M4 ${y}h9`} stroke="#7c7c80" strokeWidth="1" />
      ))}
      <path d="M61 17h8v2h-8z" fill="#3c3f70" />
      <path d="M20 24h10v6H20zM22 29h42v18H22z" fill="#29292c" />
      <path d="M18 15h12M22 33h6M25 38h16M25 42h20" stroke="#8a8a90" strokeWidth="0.900" />
      <Badge>
        <Teams />
      </Badge>
    </g>
  );
}

function Trash() {
  return (
    <g>
      <path d="M5 10L12-2l8 3 6-7 8 5 9-4 6 6 8-1 5 10c-6 8-50 8-57 0z" fill="#dcdedf" />
      <path d="M12 6l8-8 4 8zM40 2l8-6 4 8z" fill="#8b8f92" />
      <path d="M24 2l10 0-3 6zM44 2l9-1-3 5z" fill="#4a7cae" />
      <path d="M36-3l5 2-3 5zM18 6l7-2v5z" fill="#c8684a" />
      <path d="M4 6c6 10 54 10 60 0l-7 58c-1 9-44 9-46 0z" fill="url(#bin)" />
      <path d="M4 5c4 10 56 10 60 0" fill="none" stroke="#c4c8ca" strokeWidth="1.400" />
      <path d="M16 16l4 50M50 16l-3 50" stroke="#a4aaae" strokeWidth="3" opacity="0.350" />
      <path d="M12 65c8 6 36 6 44 0" fill="none" stroke="#b8bcc0" strokeWidth="1.200" />
    </g>
  );
}

const dockItems = [
  { name: "Finder", art: Finder, dot: "bg-[#a9c4ee]" },
  { name: "Launchpad", art: Launchpad },
  { name: "Safari", art: Safari },
  { name: "Messages", art: Messages },
  { name: "Mail", art: Mail },
  { name: "Maps", art: Maps },
  { name: "Photos", art: PhotosApp },
  { name: "FaceTime", art: FaceTime },
  { name: "Calendar", art: CalendarApp },
  { name: "Settings", art: Settings, dot: "bg-[#ffcf96]" },
  { name: "Visual Studio Code", art: VSCode, dot: "bg-[#ffc49a]" },
  { name: "WhatsApp", art: WhatsAppIcon, dot: "bg-[#ffb59a]" },
  { name: "Google Chrome", art: ChromeApp, dot: "bg-[#ffb898]" },
  { name: "Spotify", art: Spotify },
  { name: "Teams", art: Teams, dot: "bg-[#ffc79a]" },
  { name: "Outlook", art: Outlook, dot: "bg-[#ffc79a]" },
  { name: "Terminal", art: Terminal, dot: "bg-[#ffc49a]" },
  { name: "Anaconda", art: Anaconda },
  { split: true },
  { name: "VLC", art: Vlc, dot: "bg-[#ffb59a]" },
  { name: "Word", art: Word, dot: "bg-[#ffb098]" },
  { name: "Preview", art: Preview, dot: "bg-[#ffb098]" },
  { split: true },
  { name: "Documents", art: Documents },
  { name: "Finder window 1", art: ThumbA },
  { name: "Finder window 2", art: ThumbB },
  { name: "Settings window", art: SettingsThumb },
  { name: "Outlook window", art: OutlookThumb },
  { name: "Terminal window", art: TerminalThumb },
  { name: "Preview window", art: DiagramThumb },
  { name: "Teams window", art: TeamsThumb },
  { name: "Finder window 3", art: ThumbC },
  { name: "Trash", art: Trash },
];

function Dock() {
  return (
    <footer className="relative mx-[70px] mt-0.5 mb-[10px] flex h-[106px] rounded-[36px] border-2 border-white/20 bg-[linear-gradient(90deg,#2d4766_0%,#2f4b6e_15%,#4f4e58_17%,#6a4a38_19%,#84491f_21%,#8f4c1a_25%,#86501c_30%,#853f1a_36%,#85371a_39%,#8a441a_46%,#8a401a_53%,#8c331a_62%,#91331a_68%,#8f481a_76%,#8f481a_88%,#8a3d1a_100%)] px-1 pt-3.5 shadow-[0_0_60px_10px_rgba(0,0,0,0.28),0_0_0_1px_rgba(0,0,0,0.4)]">
      {dockItems.map((item, i) => {
        if (item.split) {
          return <span key={i} className="mx-[18px] h-[78px] w-0.5 shrink-0 bg-[#cf7858]" />;
        }
        const Art = item.art;
        return (
          <button key={i} aria-label={item.name} className="flex min-w-0 flex-1 flex-col items-center">
            <svg viewBox="0 0 68 68" className="size-[68px] shrink-0 overflow-visible">
              <Art />
            </svg>
            {item.dot && <span className={`mt-[10px] size-2 rounded-full ${item.dot}`} />}
          </button>
        );
      })}
    </footer>
  );
}

export default function App() {
  return (
    <div className="flex min-h-screen flex-col overflow-hidden bg-[linear-gradient(90deg,#64a4d4_0%,#5592cf_22%,#cfa046_23%,#cf983f_72%,#3f70b8_80%,#3a68b0_100%),linear-gradient(90deg,#38609c_0%,#3f6ea8_21.700%,#bf6438_21.800%,#c8873c_34%,#b84c2a_34.300%,#bf5e2c_44%,#c08038_44.400%,#bc6a32_56%,#b8462a_68%,#b8482a_72.300%,#c8803c_72.500%,#c46c34_85%,#c85a30_100%)] bg-[length:100%_50%,100%_100%] bg-no-repeat font-['Inter','Liberation_Sans',sans-serif]">
      <SharedDefs />
      <MenuBar />
      <div className="mt-0.5 flex flex-1 flex-col overflow-hidden rounded-[20px] border-t-2 border-[#4d4d4d] bg-black shadow-[0_0_0_1px_#000,0_16px_50px_rgba(0,0,0,0.6)]">
        <TabStrip />
        <Toolbar />
        <BookmarkBar />
        <Page />
      </div>
      <Dock />
    </div>
  );
}
